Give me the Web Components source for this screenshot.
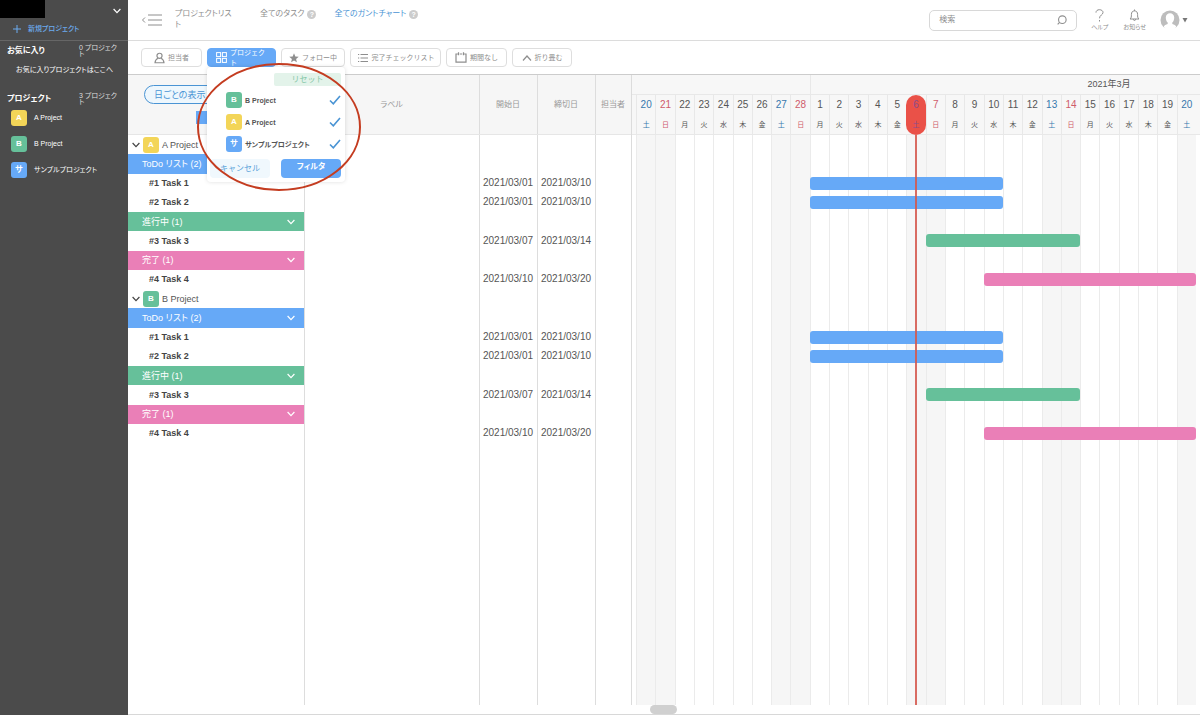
<!DOCTYPE html>
<html lang="ja">
<head>
<meta charset="utf-8">
<meta name="viewport" content="width=device-width, initial-scale=1">
<title>ガントチャート</title>
<style>
:root{--blue:#66a9f7;--green:#66c09a;--pink:#ea7fb7;--yellow:#f3d558;--link:#4a94d4;--line:#dcdcdc;--text:#555;--muted:#8e8e8e}
body{margin:0;font-family:"Liberation Sans","Noto Sans CJK JP",sans-serif;font-feature-settings:"palt";color:var(--text);background:#fff}
</style>
</head>
<body>
<gantt-app></gantt-app>
<script>
const BASE = `*{box-sizing:border-box}button,input,select{font:inherit;font-feature-settings:inherit;color:inherit;margin:0}svg{display:block;fill:none;stroke:currentColor}a{color:inherit;text-decoration:none}`;
const define = (name, css, render) => customElements.define(name, class extends HTMLElement {
  constructor() {
    super();
    const root = this.attachShadow({ mode: "open" });
    root.innerHTML = `<style>${BASE}${css}</style>${render(this)}`;
  }
});
const ICONS = {
  user: '<svg width="11" height="12" viewBox="0 0 12 12" stroke-width="1.3"><circle cx="6" cy="3.6" r="2.8"/><path d="M4.4 6.2C2.4 7 1.3 8.6 1.1 11.2h9.8C10.7 8.6 9.600 7 7.600 6.200"/></svg>',
  grid: '<svg width="11" height="11" viewBox="0 0 11 11"><rect x=".6" y=".6" width="4" height="4"/><rect x="6.4" y=".6" width="4" height="4"/><rect x=".6" y="6.400" width="4" height="4"/><rect x="6.400" y="6.400" width="4" height="4"/></svg>',
  star: '<svg width="10" height="10" viewBox="0 0 10 10" style="fill:currentColor;stroke:none"><path d="M5 .3l1.300 3.200 3.400.2-2.600 2.200.8 3.400L5 7.500 2.100 9.300l.8-3.400L.3 3.700l3.400-.2z"/></svg>',
  list: '<svg width="12" height="10" viewBox="0 0 12 10" stroke-width="1.100"><path d="M3.500 1.500h7.500M3.500 5h7.500M3.500 8.500h7.500M1 1.500h1.200M1 5h1.200M1 8.500h1.200"/></svg>',
  calendar: '<svg width="12" height="11" viewBox="0 0 12 11" stroke-width="1.200"><path d="M2.800 2H1v8.200h10V2H9.200M4.800 2h2.400M3.500.3v3M8.500.3v3"/></svg>',
  up: '<svg width="10" height="8" viewBox="0 0 10 8" stroke-width="1.200"><path d="M1 6.500l4-4.500 4 4.500"/></svg>',
  down: '<svg width="8" height="6" viewBox="0 0 8 6" stroke-width="1.200"><path d="M.6 1L4 4.600 7.400 1"/></svg>',
  check: '<svg width="12" height="10" viewBox="0 0 12 10" stroke-width="1.600"><path d="M1 5.500l3.300 3.300L11 .9"/></svg>'
};

define("project-badge", `
:host{display:grid;place-items:center;flex:none;width:16px;height:16px;border-radius:3px;background:var(--blue);color:#fff;font-weight:bold;font-size:8px;line-height:8px}
:host([tone=yellow]){background:var(--yellow)}:host([tone=green]){background:var(--green)}`, () => `<slot></slot>`);

define("side-project", `
:host{display:block;color:#fff;font-size:7px;line-height:10px}
a{display:flex;align-items:center;gap:7px;height:26px;padding-left:11px}`,
() => `<a href="#"><slot name="badge"></slot><span><slot></slot></span></a>`);

define("side-bar", `
:host{display:block;background:#4b4b4b;color:#fff;font-size:7px;line-height:10px}
.top{display:flex;justify-content:space-between;height:18px}
.logo{width:45px;background:#000}
.top button,.new{border:0;background:none;padding:0}
.top button{width:22px;display:grid;place-items:center;padding-top:4px}
.new{display:flex;align-items:center;gap:7px;width:100%;height:23px;padding-left:13px;color:#6cacf0;border-bottom:1px solid #666;font-weight:500}
.head{display:flex;justify-content:space-between;align-items:center;padding:0 8px 0 7px}
h2{margin:0;font-size:8px;line-height:12px}
.head p{margin:0;width:41px;line-height:6px;color:#ddd;word-break:break-all}
section{padding-top:4px}
section:first-of-type{height:48px}
.hint{margin:8px 0 0 16px}`,
() => `<div class="top"><div class="logo"></div><button aria-label="メニュー">${ICONS.down}</button></div>
<button class="new"><svg width="8" height="8" viewBox="0 0 8 8"><path d="M4 0v8M0 4h8"/></svg>新規プロジェクト</button>
<section><div class="head"><h2>お気に入り</h2><p>0 プロジェクト</p></div><p class="hint">お気に入りプロジェクトはここへ</p></section>
<section><div class="head"><h2>プロジェクト</h2><p>3 プロジェクト</p></div></section>
<slot></slot>`);

define("top-bar", `
:host{display:flex;align-items:center;height:41px;border-bottom:1px solid var(--line);padding:0 12px 0 13px;font-size:8px;line-height:12px;color:var(--muted)}
button{border:0;background:none;padding:0}
nav{display:flex;align-items:flex-start;flex:1;height:24px;margin-left:13px}
nav>a{width:62px;line-height:11px;word-break:break-all}
nav span{display:flex;align-items:center;gap:3px;margin-left:18px;white-space:nowrap}
nav span:first-of-type{margin-left:23px}
.on{color:var(--link)}
i{display:grid;place-items:center;width:9px;height:9px;border-radius:50%;background:#ccc;color:#fff;font:bold 7px/9px "Liberation Sans",sans-serif}
label{display:flex;align-items:center;width:148px;height:21px;border:1px solid #d8d8d8;border-radius:5px;padding:0 9px}
input{border:0;outline:0;flex:1;min-width:0;padding:0;background:none}
input::placeholder{color:var(--muted);opacity:1}
.tool{display:grid;justify-items:center;gap:1px;font-size:6px;line-height:8px}
.help{margin-left:14px}.bell{margin-left:15px}.me{margin-left:14px;display:flex;align-items:center;gap:2px}`,
() => `<button aria-label="サイドバーを閉じる"><svg width="21" height="14" viewBox="0 0 21 14"><path d="M4 4.500L1.500 7 4 9.500M7 2h14M7 7h14M7 12h14"/></svg></button>
<nav><a href="#">プロジェクトリスト</a><span><a href="#">全てのタスク</a><i>?</i></span><span><a href="#" class="on">全てのガントチャート</a><i>?</i></span></nav>
<label><input placeholder="検索" aria-label="検索"><svg width="10" height="10" viewBox="0 0 9 9"><circle cx="4.800" cy="4.200" r="3.400"/><path d="M2.300 6.600L.6 8.400"/></svg></label>
<button class="tool help"><svg width="9" height="13" viewBox="0 0 9 13"><path d="M1 3.600C1 1.700 2.500.7 4.400.7S8 1.700 8 3.400C8 6 4.500 6 4.500 9.300M4.500 11v1.500"/></svg>ヘルプ</button>
<button class="tool bell"><svg width="11" height="13" viewBox="0 0 11 13"><path d="M1 10h9C8.600 9 8.600 7.500 8.600 5.500 8.600 3 7.300 1.900 5.500 1.900S2.400 3 2.400 5.500C2.400 7.500 2.400 9 1 10zM5.500.5v1.400M4.300 10.200c0 1.700 2.400 1.700 2.400 0"/></svg>お知らせ</button>
<button class="me" aria-label="アカウント"><svg width="20" height="20" viewBox="0 0 20 20" style="stroke:none"><circle cx="10" cy="10" r="9.500" fill="#bdbdbd"/><path d="M5.800 7.500C5.800 4.800 7.600 3.200 10 3.200s4.200 1.600 4.200 4.300c0 2.200-.7 4-1.900 5.100v1.500c2 .5 3.300 1.300 4 2.400L14 20H6l-2.300-3.500c.7-1.100 2-1.900 4-2.400v-1.500C6.500 11.500 5.800 9.700 5.800 7.500z" fill="#fff"/></svg><svg width="6" height="5" viewBox="0 0 6 5" style="fill:#777;stroke:none"><path d="M.5 0h5L3 4.500z"/></svg></button>`);

define("filter-button", `
:host{display:block}
button{display:flex;align-items:center;justify-content:center;gap:3px;width:100%;height:19px;padding:0;border:1px solid #dedede;border-radius:4px;background:#fff;color:var(--muted);font-size:7px;line-height:10px;font-feature-settings:normal;text-align:left;white-space:nowrap}
svg{flex:none}
:host([active]) button{background:var(--blue);border-color:var(--blue);color:#fff;overflow:hidden;white-space:normal}
:host([active]) span{width:37px;word-break:break-all}`,
el => `<button>${ICONS[el.getAttribute("icon")]}<span><slot></slot></span></button>`);

define("menu-option", `
:host{display:block}
label{display:flex;align-items:center;gap:3px;height:22px;padding:0 4px 0 19px;font-size:7px;font-weight:bold;color:#555}
.name{flex:1;white-space:nowrap}
input{appearance:none;width:0;height:0;margin:0}
svg{display:none;color:var(--link)}input:checked+svg{display:block}`,
() => `<label><slot name="badge"></slot><span class="name"><slot></slot></span><input type="checkbox" checked>${ICONS.check}</label>`);

define("filter-menu", `
:host{display:block;width:138px;height:115px;background:#fff;border-radius:4px;box-shadow:0 0 4px #0002;padding:6px 0 0;position:absolute;z-index:3}
button{border:0;padding:0;border-radius:4px;font-size:8px;line-height:12px;height:19px;width:60px}
.reset{display:block;height:13px;width:67px;margin:0 4px 3px auto;background:#e3f3ea;color:#86c7a8;border-radius:2px;font-feature-settings:normal}
.foot{display:flex;justify-content:space-between;padding:4px 4px 0 3px}
.cancel{background:#f0f8fd;color:#5aa3da;font-feature-settings:normal}
.ok{background:var(--blue);color:#fff;font-weight:bold;padding-bottom:4px}
.ring{position:absolute;left:-11px;top:-5px;color:#c43c20;pointer-events:none}`,
() => `<button class="reset">リセット</button><slot></slot><div class="foot"><button class="cancel">キャンセル</button><button class="ok">フィルタ</button></div>
<svg class="ring" width="166" height="130" viewBox="0 0 166 130" stroke-width="2"><ellipse cx="83" cy="65" rx="81" ry="63"/></svg>`);

define("filter-bar", `
:host{display:grid;grid-template-columns:61px 69px 64px 91px 61px 60px;gap:5px;height:34px;align-items:center;padding-left:13px;border-bottom:1px solid #ccc}
.drop{position:relative}filter-menu{left:0;top:19px}`,
() => `<filter-button icon="user">担当者</filter-button>
<div class="drop"><filter-button icon="grid" active>プロジェクト</filter-button><filter-menu>
<menu-option><project-badge slot="badge" tone="green">B</project-badge>B Project</menu-option>
<menu-option><project-badge slot="badge" tone="yellow">A</project-badge>A Project</menu-option>
<menu-option><project-badge slot="badge">サ</project-badge>サンプルプロジェクト</menu-option></filter-menu></div>
<filter-button icon="star">フォロー中</filter-button><filter-button icon="list">完了チェックリスト</filter-button>
<filter-button icon="calendar">期間なし</filter-button><filter-button icon="up">折り畳む</filter-button>`);

const GROUPS = [
  { tone: "blue", name: "ToDo リスト (2)", tasks: [["#1 Task 1", "2021/03/01", "2021/03/10", 10, 20], ["#2 Task 2", "2021/03/01", "2021/03/10", 10, 20]] },
  { tone: "green", name: "進行中 (1)", tasks: [["#3 Task 3", "2021/03/07", "2021/03/14", 16, 24]] },
  { tone: "pink", name: "完了 (1)", tasks: [["#4 Task 4", "2021/03/10", "2021/03/20", 19, 30]] }
];
const PROJECTS = [["A", "yellow"], ["B", "green"]];

define("task-table", `
:host{display:block;color:#555;border-right:1px solid var(--line);
background:linear-gradient(#ddd,#ddd) 176px 60px/1px 100% no-repeat,linear-gradient(#ddd,#ddd) 351px 0/1px 100% no-repeat,linear-gradient(#ddd,#ddd) 409px 0/1px 100% no-repeat,linear-gradient(#ddd,#ddd) 467px 0/1px 100% no-repeat,linear-gradient(#f6f6f6,#f6f6f6) 0 0/100% 60px no-repeat}
table,thead,tbody{display:grid}
tr{display:grid;grid-template-columns:176px 175px 58px 58px 1fr;align-items:center}
thead tr{height:60px;border-bottom:1px solid #e6e6e6}
th,td{padding:0;font-weight:normal;white-space:nowrap}
thead th{font-size:8px;line-height:12px;color:#999}
tbody{grid-template-rows:repeat(16,1fr);height:308px}
td{font-size:10px;line-height:12px;text-align:center}
.views{display:grid;gap:7px;align-content:start;padding:10px 0 0 16px;height:59px;text-align:left}
.views button{height:19px;width:90px;border:1px solid var(--link);border-radius:10px;background:#eef7fd;color:var(--link);padding:0 9px;font-size:9px;line-height:12px;text-align:left}
.views .swap{margin-left:52px;width:60px;height:13px;background:var(--blue);border:0;border-radius:0}
.project,.group button{display:flex;align-items:center;font-size:9px;line-height:12px}
.project{padding-left:4px;gap:3px;text-align:left}
.project button{border:0;background:none;padding:0;color:#444}
.group-row,.group{height:100%}
.group button{width:100%;height:100%;border:0;color:#fff;justify-content:space-between;padding:0 9px 0 14px}
.blue button{background:var(--blue)}.green button{background:var(--green)}.pink button{background:var(--pink)}
.task{padding-left:21px;text-align:left;font-size:9px;line-height:12px;font-weight:bold;color:#444}`,
() => `<table><thead><tr><th class="views"><button>日ごとの表示</button><button class="swap" aria-label="表示切替"></button></th><th>ラベル</th><th>開始日</th><th>締切日</th><th>担当者</th></tr></thead><tbody>${
PROJECTS.map(([p, tone]) => `<tr><th class="project"><button aria-label="折り畳む">${ICONS.down}</button><project-badge tone="${tone}">${p}</project-badge>${p} Project</th></tr>` +
GROUPS.map(g => `<tr class="group-row"><th class="group ${g.tone}"><button>${g.name}${ICONS.down}</button></th></tr>` +
g.tasks.map(t => `<tr><th class="task">${t[0]}</th><td></td><td>${t[1]}</td><td>${t[2]}</td><td></td></tr>`).join("")).join("")).join("")
}</tbody></table>`);

const DAYS = Array.from({ length: 29 }, (_, i) => ({ n: i < 9 ? 20 + i : i - 8, w: "土日月火水木金"[i % 7], k: i % 7 === 0 ? "sat" : i % 7 === 1 ? "sun" : "" }));
define("time-line", `
:host{display:flex;flex-direction:column;min-width:0}
.months,.days,.cols,.bars,.now{display:grid;grid-template-columns:repeat(29,minmax(0,1fr));padding:0 4px 0 4px}
.months,.days{background:#f7f7f7;border-bottom:1px solid #e8e8e8}
.months{height:20px;font-size:9px;line-height:19px;text-align:center}
.months b{grid-column:24/27;font-weight:normal;white-space:nowrap;color:#555}.months i{grid-column:10;border-left:1px solid #e8e8e8;grid-row:1}
.days{height:40px}
.day{display:grid;grid-template-rows:20px 20px;place-items:center;font-size:10px;line-height:12px;border-left:1px solid #e8e8e8;color:#555;grid-row:1}
.day small{font-size:7px;line-height:10px}
.sat{color:#3878ad}.sun{color:#cf5c6b}
.pill{grid-column:15;grid-row:1;background:#ea5148;border-radius:10px}
.today{z-index:1;border:0;color:#8a4c8c}
.body{flex:1;display:grid}
.body>*{grid-area:1/1}
.cols span{border-left:1px solid #ebebeb}.cols .sat,.cols .sun{background:#f6f6f6}
.bars{grid-template-rows:repeat(16,1fr);height:308px;align-items:center}
.bar{height:13px;border-radius:3px}
.blue{background:var(--blue)}.green{background:var(--green)}.pink{background:var(--pink)}
.now i{grid-column:15;width:2px;justify-self:center;background:#d4564cdd}`,
() => {
  let row = 0, bars = "";
  for (const p of PROJECTS) { row++; for (const g of GROUPS) { row++; for (const t of g.tasks) { row++; bars += `<div class="bar ${g.tone}" style="grid-area:${row}/${t[3]}/auto/${t[4]}"></div>`; } } }
  return `<div class="months"><i></i><b>2021年3月</b></div>
<div class="days"><span class="pill"></span>${DAYS.map((d, i) => `<div class="day ${d.k}${i === 14 ? " today" : ""}" style="grid-column:${i + 1}"><span>${d.n}</span><small>${d.w}</small></div>`).join("")}</div>
<div class="body"><div class="cols">${DAYS.map(d => `<span class="${d.k}"></span>`).join("")}</div><div class="bars">${bars}</div><div class="now"><i></i></div></div>`;
});

define("gantt-app", `
:host{display:grid;grid-template-columns:128px minmax(0,1fr);min-height:100vh}
main{display:flex;flex-direction:column;border-bottom:1px solid #d8d8d8}
.board{flex:1;display:grid;grid-template-columns:504px minmax(0,1fr)}
.scroll{height:9px;padding-left:522px}
.scroll div{width:27px;height:9px;border-radius:5px;background:#d0d0d0}`,
() => `<side-bar>
<side-project><project-badge slot="badge" tone="yellow">A</project-badge>A Project</side-project>
<side-project><project-badge slot="badge" tone="green">B</project-badge>B Project</side-project>
<side-project><project-badge slot="badge">サ</project-badge>サンプルプロジェクト</side-project></side-bar>
<main><top-bar></top-bar><filter-bar></filter-bar><div class="board"><task-table></task-table><time-line></time-line></div><div class="scroll"><div></div></div></main>`);
</script>
</body>
</html>
